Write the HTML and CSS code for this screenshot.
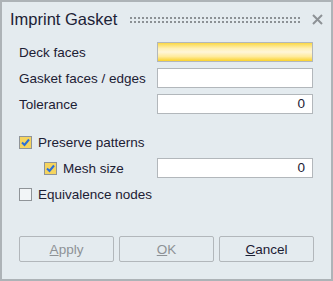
FILE: index.html
```html
<!DOCTYPE html>
<html lang="en">
<head>
  <meta charset="UTF-8">
  <title>Imprint Gasket</title>
  <link rel="stylesheet" href="styles.css">
</head>
<body>
  <div class="dialog">
    <!-- title bar -->
    <div class="titleBar">
      <span class="title">Imprint Gasket</span>
      <span class="grip"></span>
      <svg class="closeIcon" width="11" height="11" viewBox="0 0 11 11">
        <path d="M1 1 L10 10 M10 1 L1 10" stroke="#8d9296" stroke-width="2"/>
      </svg>
    </div>

    <!-- inputs -->
    <div class="fieldGrid">
      <label class="fieldLabel">Deck faces</label>
      <div class="field active"></div>
      <label class="fieldLabel">Gasket faces / edges</label>
      <div class="field"></div>
      <label class="fieldLabel">Tolerance</label>
      <div class="field number">0</div>
    </div>

    <!-- options -->
    <div class="optionGrid">
      <div class="check checked">
        <span class="box"><svg width="11" height="11" viewBox="0 0 11 11"><path d="M2 5.5 L4.5 8 L9 2.5" fill="none" stroke="#2a6ed8" stroke-width="2"/></svg></span>
        Preserve patterns
      </div>
      <div></div>
      <div class="check checked indent">
        <span class="box"><svg width="11" height="11" viewBox="0 0 11 11"><path d="M2 5.5 L4.5 8 L9 2.5" fill="none" stroke="#2a6ed8" stroke-width="2"/></svg></span>
        Mesh size
      </div>
      <div class="field number">0</div>
      <div class="check">
        <span class="box"></span>
        Equivalence nodes
      </div>
      <div></div>
    </div>

    <!-- buttons -->
    <div class="buttonRow">
      <button class="dlgButton" disabled><u>A</u>pply</button>
      <button class="dlgButton" disabled><u>O</u>K</button>
      <button class="dlgButton"><u>C</u>ancel</button>
    </div>
  </div>
</body>
</html>
```

FILE: styles.css
```css
/* base */
body {
  margin: 0;
  font-family: "Liberation Sans", Arial, sans-serif;
  font-size: 13.5px;
  color: #1c2034;
}

/* dialog frame */
.dialog {
  width: 333px;
  height: 281px;
  box-sizing: border-box;
  border: 2px solid #adb3b7;
  background: #e4ebef;
  padding: 0 17px;
}

/* title */
.titleBar {
  display: flex;
  align-items: center;
  height: 34px;
  margin-left: -9px;
  margin-right: -9px;
}

.title {
  font-size: 16.5px;
  color: #1d2236;
}

.grip {
  flex: 1;
  height: 6px;
  margin: 1px 12px 0 13px;
  background: repeating-linear-gradient(90deg, #8c9195 0 2px, transparent 2px 4px);
  -webkit-mask: linear-gradient(#000 0 2px, transparent 2px 4px, #000 4px 6px);
  mask: linear-gradient(#000 0 2px, transparent 2px 4px, #000 4px 6px);
}

.closeIcon {
  margin-top: 1px;
}

/* field grid */
.fieldGrid,
.optionGrid {
  display: grid;
  grid-template-columns: 138px 156px;
  grid-auto-rows: 20px;
  row-gap: 6px;
  align-items: center;
}

.fieldGrid {
  margin-top: 6px;
}

.optionGrid {
  margin-top: 18px;
}

.field {
  height: 20px;
  box-sizing: border-box;
  border: 1px solid #b2b7bb;
  background: white;
}

.field.active {
  background: linear-gradient(#fad845, #fff0b5 30%, #fff6d8 50%, #ffeb9c 75%, #fad22c);
}

.field.number {
  text-align: right;
  padding-right: 7px;
  line-height: 18px;
}

/* check boxes */
.check {
  display: flex;
  align-items: center;
  gap: 6px;
}

.check.indent {
  padding-left: 25px;
}

.box {
  width: 13px;
  height: 13px;
  box-sizing: border-box;
  border: 1px solid #8f9498;
  background: #f2f5f7;
  display: flex;
  align-items: center;
  justify-content: center;
}

.check.checked .box {
  background: #f5d45e;
}

/* buttons */
.buttonRow {
  display: flex;
  gap: 5px;
  margin-top: 32px;
}

.dlgButton {
  width: 95px;
  height: 26px;
  border: 1px solid #b2b7bb;
  border-radius: 2px;
  background: #e4ebef;
  font-family: inherit;
  font-size: 13.5px;
  color: #1c2034;
  padding: 0;
}

.dlgButton:disabled {
  color: #8d9296;
}
```
